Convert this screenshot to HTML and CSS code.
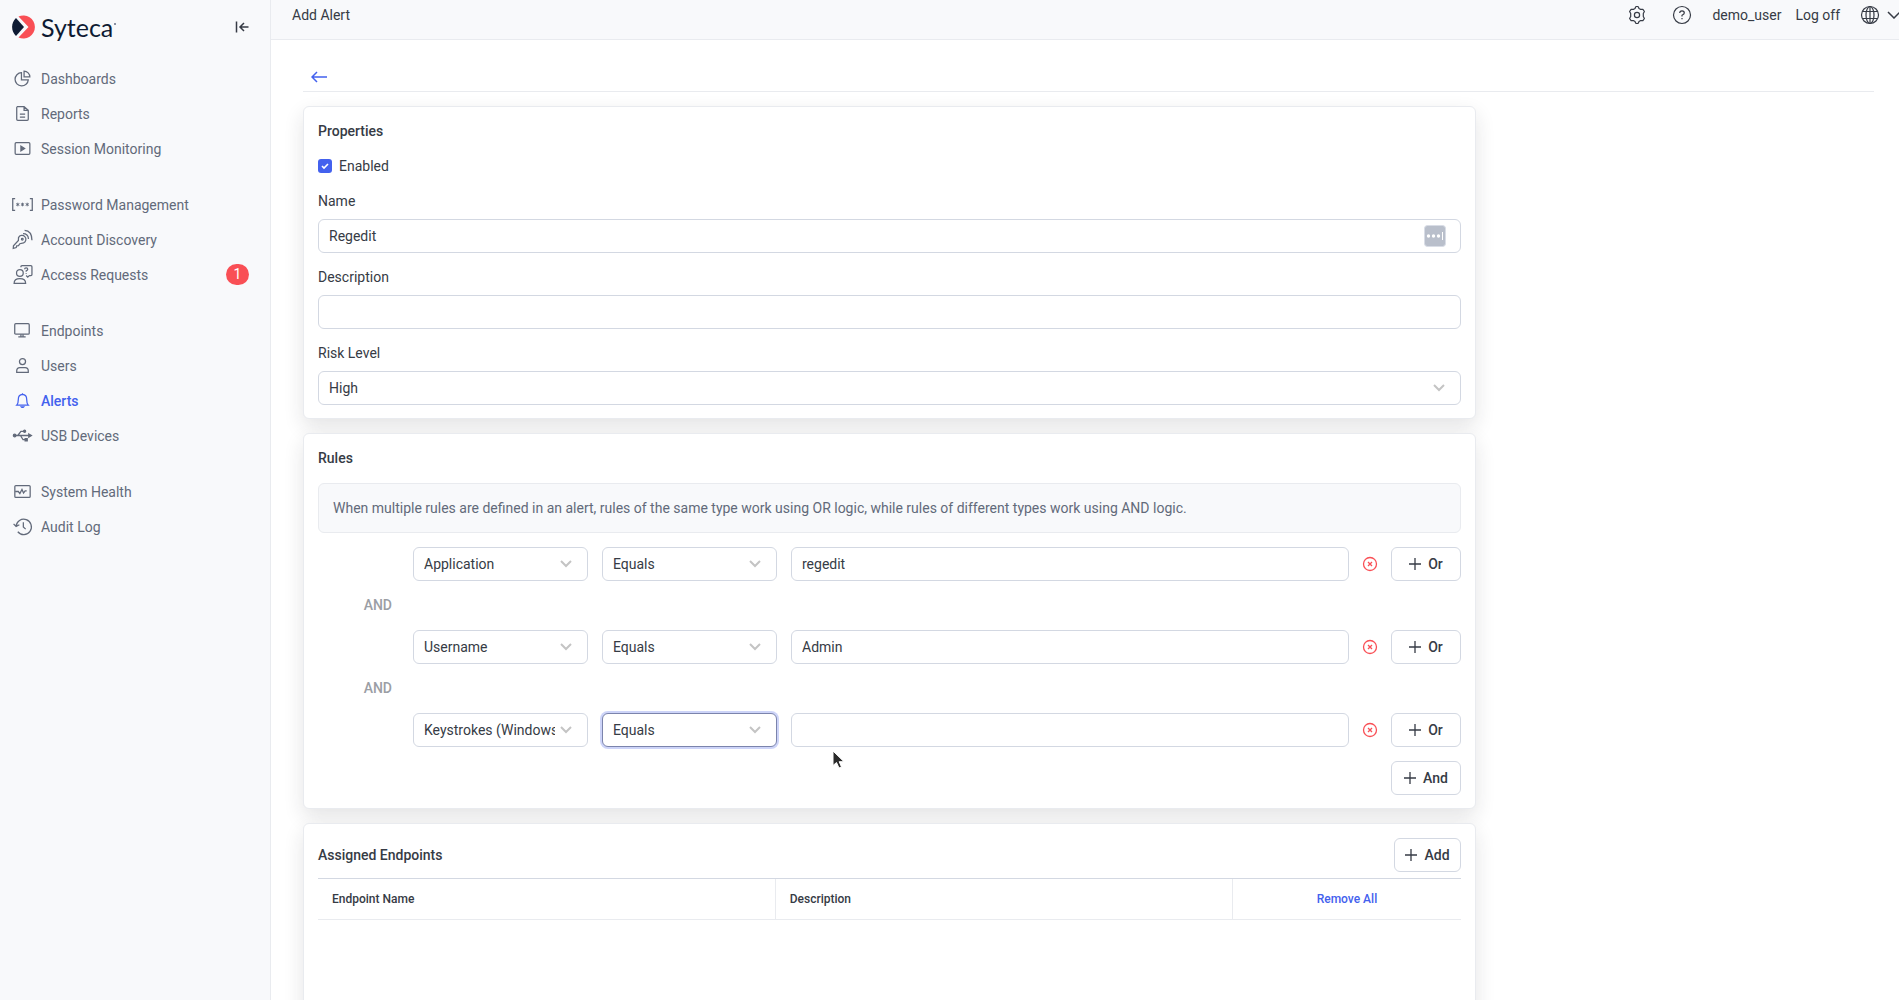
FILE: index.html
```html
<!DOCTYPE html>
<html lang="en">
<head>
<meta charset="utf-8">
<title>Add Alert - Syteca</title>
<meta name="viewport" content="width=device-width, initial-scale=1">
<link rel="stylesheet" href="styles.css">
</head>
<body>
<div class="app">
  <aside class="sidebar">
    <div class="brand">
      <svg class="brand-mark" viewBox="0 0 24 24" aria-hidden="true">
        <path d="M4 3 12 12 4 21C-1.200 16-1.200 8 4 3Z" fill="#0e1b33"/>
        <path d="M6.500 1.600A11.500 11.500 0 1 1 6.500 22.400L16.500 12Z" fill="#f94f55"/>
      </svg>
      <span class="brand-name">Syteca</span><span class="brand-dot"></span>
      <button class="collapse" type="button" aria-label="Collapse menu">
        <svg class="icon-collapse" viewBox="0 0 14 12"><path d="M1.500 .5v11M13.500 6H5M9 2 5 6l4 4"/></svg>
      </button>
    </div>
    <nav class="nav">
      <ul class="nav-group">
        <li><a class="nav-link" href="#"><svg class="icon" viewBox="0 0 20 20"><path d="M9 4.500a6.300 6.300 0 1 0 6.500 6.800H9Z"/><path d="M11.500 3v5.500H17A5.500 5.500 0 0 0 11.500 3Z"/></svg>Dashboards</a></li>
        <li><a class="nav-link" href="#"><svg class="icon" viewBox="0 0 20 20"><path d="M5 3.500h6.500L15.500 7v8.500a1 1 0 0 1-1 1H5.500a1 1 0 0 1-1-1v-11a1 1 0 0 1 .5-1ZM11.500 3.500V7h4M7.500 10.500h5M7.500 13.500h5"/></svg>Reports</a></li>
        <li><a class="nav-link" href="#"><svg class="icon" viewBox="0 0 20 20"><rect x="3" y="4.500" width="14" height="11" rx="1"/><path d="M8.500 7.800v4.400l3.500-2.200Z" class="solid"/></svg>Session Monitoring</a></li>
      </ul>
      <ul class="nav-group">
        <li><a class="nav-link" href="#"><svg class="icon" viewBox="0 0 20 20"><path d="M3 4.500H.7v11H3M17 4.500h2.300v11H17"/><path d="M5.500 8.300v3.400M4 9.100l3 1.800M7 9.100l-3 1.800M10 8.300v3.400M8.500 9.100l3 1.800M11.500 9.100l-3 1.800M14.500 8.300v3.400M13 9.100l3 1.800M16 9.100l-3 1.800" stroke-width=".9"/></svg>Password Management</a></li>
        <li><a class="nav-link" href="#"><svg class="icon" viewBox="0 0 20 20"><path d="M6.200 8.200a3.700 3.700 0 1 1 4.800 5l-3.500.8-1.300 1.800-1.700.2-.5 1.700-2.800.8.200-2.500 4.700-5Z"/><circle cx="9.800" cy="9.800" r=".8"/><path d="M10.500 4.500c3 0 5 2 5.200 5M12 1.200c4.500.3 7 4 7 9.500"/></svg>Account Discovery</a></li>
        <li><a class="nav-link" href="#"><svg class="icon" viewBox="0 0 20 20"><circle cx="7.500" cy="8.500" r="3.200"/><path d="M2 18.500c0-3 2-4.500 5.500-4.500s5.500 1.500 5.500 4.500ZM8.500 3V2.500q0-1 1-1h8.500q1 0 1 1v7.500q0 1-1 1h-1.500l-1.500 1.500-1.500-1.500"/><path d="M12 5q0-1.300 1.500-1.300T15 5q0 .8-1.500 1.600v.8M13.500 8.700v.8"/></svg>Access Requests</a><span class="badge">1</span></li>
      </ul>
      <ul class="nav-group">
        <li><a class="nav-link" href="#"><svg class="icon" viewBox="0 0 20 20"><rect x="2.600" y="3.500" width="13.800" height="10" rx="1"/><path d="M6 16h7M8.500 13.500V16M10.500 13.500V16"/></svg>Endpoints</a></li>
        <li><a class="nav-link" href="#"><svg class="icon" viewBox="0 0 20 20"><circle cx="10" cy="6.300" r="2.900"/><path d="M4.500 16.500v-1.500q0-3 3-3h5q3 0 3 3v1.500Z"/></svg>Users</a></li>
        <li><a class="nav-link active" href="#" aria-current="page"><svg class="icon" viewBox="0 0 20 20"><path d="M4.500 14.500q1.500-1.500 1.500-5.500 0-4.500 4-4.800 4 .3 4 4.800 0 4 1.500 5.500ZM10 4.200V3.200M8.800 16q1.200 1.300 2.400 0Z"/></svg>Alerts</a></li>
        <li><a class="nav-link" href="#"><svg class="icon" viewBox="0 0 20 20"><circle cx="2.500" cy="10" r="1.200" class="solid"/><path d="M3 10h14M5.500 10l3-4h2.500M8 10l2.500 4h2.500"/><path d="M16 8.500l2.500 1.500-2.500 1.500Z" class="solid"/><circle cx="12" cy="6" r="1" class="solid"/><path d="M12.500 13h2v2h-2Z" class="solid"/></svg>USB Devices</a></li>
      </ul>
      <ul class="nav-group">
        <li><a class="nav-link" href="#"><svg class="icon" viewBox="0 0 20 20"><rect x="2.700" y="4.300" width="14.600" height="11.400" rx="1"/><path d="M3 10h3l1.500 2L9.500 8l1.500 3.500 1.500-2H14"/></svg>System Health</a></li>
        <li><a class="nav-link" href="#"><svg class="icon" viewBox="0 0 20 20"><path d="M3.900 10A7.300 7.300 0 1 1 5.500 15M1.500 7.500l2.400 2.500L7 8.300M10.800 6v4.500l2.200 2"/></svg>Audit Log</a></li>
      </ul>
    </nav>
  </aside>

  <div class="page">
    <header class="topbar">
      <h1 class="topbar-title">Add Alert</h1>
      <button class="icon-btn gear" type="button" aria-label="Settings">
        <svg class="icon-lg" viewBox="0 0 20 20"><path d="M8 3.400 9 1.500h2l1 1.900 1.700 1 2.200-.1 1.500 2.200-1.100 2v3l1.100 2-1.500 2.200-2.200-.1-1.700 1-1 1.900H9l-1-1.900-1.700-1-2.200.1-1.500-2.200 1.100-2v-3l-1.100-2 1.500-2.200 2.200.1Z" stroke-linejoin="round"/><circle cx="10" cy="10" r="2.600"/></svg>
      </button>
      <button class="icon-btn help" type="button" aria-label="Help">
        <svg class="icon-lg" viewBox="0 0 20 20"><circle cx="10" cy="10" r="8.500"/><path d="M7.700 8Q7.700 5.800 10 5.800T12.300 8Q12.300 9.200 10 10.300V11.500M10 13v1.300"/></svg>
      </button>
      <a class="top-link" href="#">demo_user</a>
      <a class="top-link logoff" href="#">Log off</a>
      <button class="icon-btn lang" type="button" aria-label="Language">
        <svg class="icon-lg" viewBox="0 0 20 20"><circle cx="10" cy="10" r="8.500"/><ellipse cx="10" cy="10" rx="4" ry="8.500"/><path d="M10 1.500v17M2.500 6.500h15M2.500 13.500h15"/></svg>
        <svg class="icon-caret" viewBox="0 0 14 8"><path d="m1 1 6 6 6-6"/></svg>
      </button>
    </header>

    <main class="content">
      <div class="page-head">
        <a class="back" href="#" aria-label="Back"><svg class="icon-back" viewBox="0 0 16 12"><path d="M16 6H1M6 1 1 6l5 5"/></svg></a>
      </div>
      <form class="cards">
        <section class="card">
          <h2 class="card-title">Properties</h2>
          <label class="check"><input class="check-box" type="checkbox" checked>Enabled</label>
          <div class="field">
            <label for="name">Name</label>
            <div class="with-addon">
              <input class="control" id="name" type="text" value="Regedit">
              <svg class="addon" viewBox="0 0 22 22" aria-hidden="true"><rect x=".5" y=".5" width="21" height="21" rx="3" fill="#b9bfcb" stroke="#d9dde6"/><g fill="#fff"><circle cx="4.500" cy="11" r="1.700"/><circle cx="9.500" cy="11" r="1.700"/><circle cx="14.500" cy="11" r="1.700"/><path d="M18 7h1v8h-1z"/></g></svg>
            </div>
          </div>
          <div class="field">
            <label for="description">Description</label>
            <input class="control" id="description" type="text">
          </div>
          <div class="field">
            <label for="risk">Risk Level</label>
            <select class="control" id="risk"><option>High</option></select>
          </div>
        </section>

        <section class="card card-rules">
          <h2 class="card-title">Rules</h2>
          <p class="notice">When multiple rules are defined in an alert, rules of the same type work using OR logic, while rules of different types work using AND logic.</p>
          <div class="rules">
            <div class="rule">
              <select class="control" aria-label="Rule type"><option>Application</option></select>
              <select class="control" aria-label="Operator"><option>Equals</option></select>
              <input class="control" type="text" aria-label="Value" value="regedit">
              <button class="remove" type="button" aria-label="Remove rule"><svg class="icon-remove" viewBox="0 0 16 16"><circle cx="8" cy="8" r="6.500"/><path d="m6 6 4 4M10 6l-4 4"/></svg></button>
              <button class="btn" type="button"><svg class="icon-plus" viewBox="0 0 12 12"><path d="M6 0v12M0 6h12"/></svg>Or</button>
            </div>
            <div class="joiner">AND</div>
            <div class="rule">
              <select class="control" aria-label="Rule type"><option>Username</option></select>
              <select class="control" aria-label="Operator"><option>Equals</option></select>
              <input class="control" type="text" aria-label="Value" value="Admin">
              <button class="remove" type="button" aria-label="Remove rule"><svg class="icon-remove" viewBox="0 0 16 16"><circle cx="8" cy="8" r="6.500"/><path d="m6 6 4 4M10 6l-4 4"/></svg></button>
              <button class="btn" type="button"><svg class="icon-plus" viewBox="0 0 12 12"><path d="M6 0v12M0 6h12"/></svg>Or</button>
            </div>
            <div class="joiner">AND</div>
            <div class="rule">
              <select class="control" aria-label="Rule type"><option>Keystrokes (Windows)</option></select>
              <select class="control focused" aria-label="Operator"><option>Equals</option></select>
              <input class="control" type="text" aria-label="Value">
              <button class="remove" type="button" aria-label="Remove rule"><svg class="icon-remove" viewBox="0 0 16 16"><circle cx="8" cy="8" r="6.500"/><path d="m6 6 4 4M10 6l-4 4"/></svg></button>
              <button class="btn" type="button"><svg class="icon-plus" viewBox="0 0 12 12"><path d="M6 0v12M0 6h12"/></svg>Or</button>
            </div>
          </div>
          <div class="rules-foot">
            <button class="btn" type="button"><svg class="icon-plus" viewBox="0 0 12 12"><path d="M6 0v12M0 6h12"/></svg>And</button>
          </div>
        </section>

        <section class="card card-endpoints">
          <div class="card-head">
            <h2 class="card-title">Assigned Endpoints</h2>
            <button class="btn btn-add" type="button"><svg class="icon-plus" viewBox="0 0 12 12"><path d="M6 0v12M0 6h12"/></svg>Add</button>
          </div>
          <table class="table">
            <thead><tr><th scope="col">Endpoint Name</th><th scope="col">Description</th><th class="col-action" scope="col"><a class="remove-all" href="#">Remove All</a></th></tr></thead>
            <tbody></tbody>
          </table>
        </section>
      </form>
    </main>
  </div>
</div>
<svg class="pointer" viewBox="0 0 14 20" aria-hidden="true"><path d="M1 1v14.500l3.500-3L7 18l2.500-1-2.300-5.300H12Z" fill="#2b2b2b" stroke="#fff"/></svg>
</body>
</html>
```
FILE: styles.css
```css
* { box-sizing: border-box; }

:root {
  --text: #363b45;
  --muted: #626a7a;
  --accent: #4361ee;
  --danger: #f94f55;
  --line: #e9ebef;
  --field: #d3d8e2;
  --panel: #f8f9fb;
}

body {
  margin: 0;
  height: 100vh;
  overflow: hidden;
  font: 14px/20px Roboto, "Liberation Sans", sans-serif;
  color: var(--text);
  background: #fff;
}

h1, h2, p, ul { margin: 0; padding: 0; }
ul { list-style: none; }
a { text-decoration: none; }
button, input, select { font: inherit; color: inherit; margin: 0; }
button { padding: 0; border: 0; background: none; }
svg { display: block; flex: none; fill: none; stroke: currentColor; }
.brand-mark, .addon g { stroke: none; }
.solid { fill: currentColor; }

.app { display: flex; height: 100%; }

/* Sidebar */
.sidebar {
  flex: none;
  width: 271px;
  background: var(--panel);
  border-right: 1px solid var(--line);
}
.brand {
  display: flex;
  align-items: center;
  height: 53px;
  padding: 0 21px 0 12px;
}
.brand-mark { width: 24px; height: 24px; }
.brand-name {
  margin-left: 5px;
  font: 25px/30px Lato, sans-serif;
  color: #0e1b33;
}
.brand-dot {
  width: 2px;
  height: 2px;
  margin: 0 0 6px 1px;
  background: #8a92a3;
}
.collapse { margin-left: auto; }
.icon-collapse { width: 14px; height: 12px; stroke-width: 1.500; }
.nav {
  display: flex;
  flex-direction: column;
  gap: 21px;
  padding: 8px 21px 0 12px;
}
.nav-group li { display: flex; align-items: center; height: 35px; }
.nav-link {
  display: flex;
  align-items: center;
  gap: 8px;
  color: var(--muted);
}
.nav-link.active { color: var(--accent); font-weight: 500; }
.icon { width: 21px; height: 21px; stroke-width: 1.200; }
.badge {
  min-width: 23px;
  height: 21px;
  margin-left: auto;
  border-radius: 11px;
  background: var(--danger);
  color: #fff;
  text-align: center;
}

/* Top bar */
.page { flex: 1; min-width: 0; }
.topbar {
  display: flex;
  align-items: center;
  height: 40px;
  padding: 0 0 10px 21px;
  overflow: hidden;
  background: var(--panel);
  border-bottom: 1px solid var(--line);
}
.topbar-title { margin-right: auto; font-size: 14px; font-weight: 400; }
.icon-lg { width: 20px; height: 20px; stroke-width: 1.200; }
.icon-caret { width: 14px; height: 8px; stroke-width: 1.500; }
.icon-btn { display: flex; align-items: center; gap: 7px; }
.help { margin: 0 20px 0 25px; }
.top-link { color: inherit; }
.logoff { margin: 0 20px 0 14px; }
.lang { margin-right: -2px; }

/* Content */
.content { padding: 0 25px 0 32px; }
.page-head {
  display: flex;
  align-items: flex-end;
  height: 52px;
  padding: 0 8px 8px;
  border-bottom: 1px solid var(--line);
}
.icon-back { width: 16px; height: 12px; color: var(--accent); stroke-width: 1.500; }
.cards {
  display: flex;
  flex-direction: column;
  gap: 14px;
  max-width: 1173px;
  padding-top: 14px;
}
.card {
  display: flex;
  flex-direction: column;
  padding: 14px 14px 13px;
  border: 1px solid var(--line);
  border-radius: 6px;
  background: #fff;
  box-shadow: 0 8px 20px rgba(30, 35, 40, .12);
}
.card-title {
  margin-bottom: 15px;
  font-size: 14px;
  font-weight: 500;
}
.check { display: flex; align-items: center; gap: 7px; margin-bottom: 15px; }
.check-box {
  appearance: none;
  width: 14px;
  height: 14px;
  border-radius: 3px;
  background: var(--accent) url("data:image/svg+xml,%3Csvg xmlns='http://www.w3.org/2000/svg' viewBox='0 0 14 14'%3E%3Cpath d='m4 7 2 2 4-4' fill='none' stroke='%23fff' stroke-width='1.600'/%3E%3C/svg%3E");
}
.field { display: flex; flex-direction: column; gap: 8px; }
.field + .field { margin-top: 14px; }
.control {
  width: 100%;
  min-width: 0;
  height: 34px;
  padding: 0 10px;
  border: 1px solid var(--field);
  border-radius: 6px;
  background-color: #fff;
}
select.control {
  appearance: none;
  padding-right: 32px;
  background-image: url("data:image/svg+xml,%3Csvg xmlns='http://www.w3.org/2000/svg' viewBox='0 0 12 8'%3E%3Cpath d='m1 1 5 5 5-5' fill='none' stroke='%23c4c4c4' stroke-width='2'/%3E%3C/svg%3E");
  background-repeat: no-repeat;
  background-position: right 15px center;
  background-size: 12px 8px;
}
select.control.focused {
  border-color: #7b84ac;
  box-shadow: 0 0 0 2px #cdd4f8;
}
.with-addon { position: relative; }
.addon {
  position: absolute;
  top: 6px;
  right: 15px;
  width: 22px;
  height: 22px;
}

.notice {
  margin-bottom: 14px;
  padding: 14px;
  border: 1px solid var(--line);
  border-radius: 6px;
  background: var(--panel);
  color: var(--muted);
}
.rule {
  display: grid;
  grid-template-columns: 175px 175px minmax(0, 1fr) 14px 70px;
  align-items: center;
  gap: 14px;
  padding-left: 95px;
}
.rule .remove { justify-self: center; }
.icon-remove { width: 16px; height: 16px; color: var(--danger); stroke-width: 1.300; }
.joiner {
  width: 81px;
  margin: 14px 0 15px;
  padding-right: 7px;
  color: #9b9ea5;
  font-weight: 500;
  text-align: right;
}
.btn {
  display: flex;
  align-items: center;
  justify-content: center;
  gap: 7px;
  width: 70px;
  height: 34px;
  border: 1px solid var(--field);
  border-radius: 6px;
  background: #fff;
  font-weight: 500;
}
.icon-plus { width: 12px; height: 12px; stroke-width: 1.300; }
.rules-foot { display: flex; justify-content: flex-end; margin-top: 14px; }

.card-endpoints { min-height: 300px; }
.card-head { display: flex; align-items: center; justify-content: space-between; margin-bottom: 6px; }
.card-head .card-title { margin: 0; }
.btn-add { width: 67px; }
.table { width: 100%; border-collapse: collapse; table-layout: fixed; }
.table th {
  height: 41px;
  padding: 0 14px;
  border-top: 1px solid var(--field);
  border-bottom: 1px solid var(--line);
  font-size: 12px;
  font-weight: 500;
  text-align: left;
}
.table th + th { border-left: 1px solid var(--line); }
.table th:nth-child(-n+2) { width: 40%; }
.table .col-action { text-align: center; }
.remove-all { color: var(--accent); }

.pointer {
  position: absolute;
  top: 750px;
  left: 832px;
  width: 14px;
  height: 20px;
}
```
